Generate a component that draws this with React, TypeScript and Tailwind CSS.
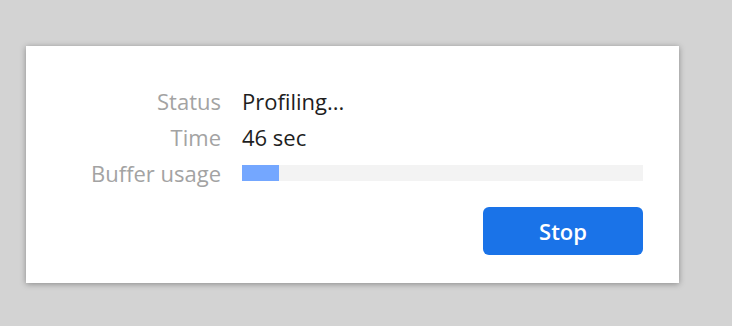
export default function App() {
  return (
    <div className="w-[732px] h-[326px] bg-[#d3d3d3] pt-[46px] pl-[26px]" style={{ fontFamily: '"Open Sans", "Noto Sans", sans-serif' }}>
      <div className="w-[653px] h-[237px] bg-white shadow-[0_1px_6px_rgba(0,0,0,0.35)] pt-[37px] pr-[36px] flex flex-col">
        <div className="grid grid-cols-[195px_1fr] gap-x-[21px] text-[22px] leading-[36px]">
          <div className="text-right text-[#a3a3a3]">Status</div>
          <div className="text-[#1e1e1e]">Profiling...</div>
          <div className="text-right text-[#a3a3a3]">Time</div>
          <div className="text-[#1e1e1e]">46 sec</div>
          <div className="text-right text-[#a3a3a3]">Buffer usage</div>
          <div className="flex items-center">
            <div className="w-full h-[16px] bg-[#f3f3f3]">
              <div className="h-full w-[37px] bg-[#74a7ff]" />
            </div>
          </div>
        </div>
        <div className="flex justify-end mt-[16px]">
          <button className="w-[160px] h-[48px] rounded-[6px] bg-[#1a73e8] text-white text-[22px] font-semibold">Stop</button>
        </div>
      </div>
    </div>
  );
}
